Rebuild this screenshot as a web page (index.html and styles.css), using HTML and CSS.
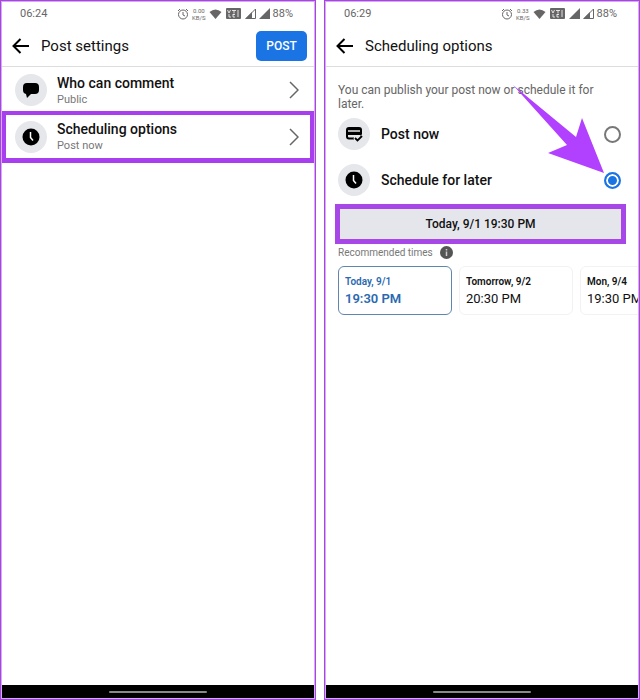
FILE: index.html
```html
<!DOCTYPE html>
<html lang="en">
<head>
  <meta charset="UTF-8" />
  <meta name="viewport" content="width=device-width, initial-scale=1.0"/>
  <title>Scheduling options</title>

  <link rel="stylesheet" href="styles.css">
</head>
<body>

  <svg class="symbols" aria-hidden="true">
    <symbol id="alarm" viewBox="0 0 12 12">
      <circle cx="6" cy="6.5" r="4.5" fill="none" stroke="currentColor" />
      <path d="M6 4v3l2 1M1 3l2-2M11 3L9 1" fill="none" stroke="currentColor" />
    </symbol>
    <symbol id="wifi" viewBox="0 0 12 10">
      <path d="M0 3Q6-2 12 3L6 10Z" fill="currentColor" />
    </symbol>
    <symbol id="volte" viewBox="0 0 15 11">
      <rect width="15" height="11" rx="1" fill="currentColor" />
      <path d="M1.5 2l1.5 3L4.5 2M6 2.500h4M8 2.500v3M3 6v3h2M7 6v3M7 6.500h2M7 9h2M12 2v7" fill="none" stroke="#fff" stroke-width="0.8" />
    </symbol>
    <symbol id="signal-low" viewBox="0 0 11 11">
      <path d="M10.5 1v9.500H1Z" fill="none" stroke="currentColor" />
      <path d="M7 4v7H0Z" fill="currentColor" />
    </symbol>
    <symbol id="signal-full" viewBox="0 0 11 11">
      <path d="M11 0v11H0Z" fill="currentColor" />
    </symbol>
    <symbol id="back" viewBox="0 0 18 16">
      <path d="M17 8H2M8.500 1L1.500 8l7 7" fill="none" stroke="#000" stroke-width="2" />
    </symbol>
    <symbol id="clock" viewBox="0 0 18 18">
      <circle cx="9" cy="9" r="8.5" fill="#000" />
      <path d="M8.500 4v5.500l2.500 3" fill="none" stroke="#fff" stroke-width="1.5" />
    </symbol>
    <symbol id="chevron" viewBox="0 0 10 18">
      <path d="M1 1l8 8-8 8" fill="none" stroke="#666" stroke-width="1.5" />
    </symbol>
  </svg>

  <div class="screens">

    <section class="phone">
      <div class="status">
        <span class="time">06:24</span>
        <svg width="12" height="12"><use href="#alarm" /></svg>
        <span class="speed"><span>0.00</span><span>KB/S</span></span>
        <svg width="13" height="10"><use href="#wifi" /></svg>
        <svg class="volte" width="15" height="11"><use href="#volte" /></svg>
        <svg width="11" height="11"><use href="#signal-low" /></svg>
        <svg width="11" height="11"><use href="#signal-full" /></svg>
        <span>88%</span>
      </div>

      <header class="header">
        <button class="back" aria-label="Back"><svg width="18" height="16"><use href="#back" /></svg></button>
        <h1>Post settings</h1>
        <button class="post-btn">POST</button>
      </header>

      <main class="settings">
        <button class="setting">
          <span class="icon">
            <svg width="18" height="18" viewBox="0 0 18 18">
              <path d="M5 2h8q4 0 4 4v3q0 4-4 4H9l-4 4-1-4q-3-.5-3-4V6q0-4 4-4Z" />
            </svg>
          </span>
          <span class="setting-text">
            <strong>Who can comment</strong>
            <small>Public</small>
          </span>
          <svg width="10" height="18"><use href="#chevron" /></svg>
        </button>
        <button class="setting highlight">
          <span class="icon"><svg width="18" height="18"><use href="#clock" /></svg></span>
          <span class="setting-text">
            <strong>Scheduling options</strong>
            <small>Post now</small>
          </span>
          <svg width="10" height="18"><use href="#chevron" /></svg>
        </button>
      </main>

      <div class="nav-bar"><span></span></div>
    </section>

    <section class="phone">
      <div class="status">
        <span class="time">06:29</span>
        <svg width="12" height="12"><use href="#alarm" /></svg>
        <span class="speed"><span>0.33</span><span>KB/S</span></span>
        <svg width="13" height="10"><use href="#wifi" /></svg>
        <svg class="volte" width="15" height="11"><use href="#volte" /></svg>
        <svg width="11" height="11"><use href="#signal-full" /></svg>
        <svg width="11" height="11"><use href="#signal-low" /></svg>
        <span>88%</span>
      </div>

      <header class="header">
        <button class="back" aria-label="Back"><svg width="18" height="16"><use href="#back" /></svg></button>
        <h1>Scheduling options</h1>
      </header>

      <main class="schedule">
        <p class="intro">You can publish your post now or schedule it for later.</p>

        <label class="option">
          <span class="icon">
            <svg width="18" height="16" viewBox="0 0 18 16">
              <path d="M4 1h10q3 0 3 3v5H1V4q0-3 3-3Z" />
              <path d="M2 8v2.500q0 2 2 2h5M16 8v2" fill="none" stroke="#000" stroke-width="2" />
              <path d="M3 5h12" stroke="#e6e7eb" stroke-width="1.5" />
              <path d="M4 10h7" stroke="#e6e7eb" stroke-width="2" />
              <path d="M9.500 11.500l3 3 5-5" fill="none" stroke="#e6e7eb" stroke-width="3" />
              <path d="M10 12l2.500 2.500L17 10" fill="none" stroke="#000" stroke-width="1.8" />
            </svg>
          </span>
          <span class="option-name">Post now</span>
          <input type="radio" name="when" value="now" />
        </label>

        <label class="option">
          <span class="icon"><svg width="18" height="18"><use href="#clock" /></svg></span>
          <span class="option-name">Schedule for later</span>
          <input type="radio" name="when" value="later" checked />
          <svg class="pointer" width="92" height="88" viewBox="0 0 92 88" aria-hidden="true">
            <path d="M0 0L63 52L69 33L91 88L35 68L54 60Z" fill="#b140ff" />
          </svg>
        </label>

        <button class="date-btn">Today, 9/1 19:30 PM</button>

        <div class="recommended">
          <span>Recommended times</span>
          <svg width="13" height="13" viewBox="0 0 13 13">
            <circle cx="6.5" cy="6.5" r="6.5" fill="#555" />
            <path d="M6.500 3v1.500M6.500 5.500v4.500" stroke="#ccc" stroke-width="1.5" />
          </svg>
        </div>

        <div class="times">
          <button class="time-card selected"><small>Today, 9/1</small><span>19:30 PM</span></button>
          <button class="time-card"><small>Tomorrow, 9/2</small><span>20:30 PM</span></button>
          <button class="time-card"><small>Mon, 9/4</small><span>19:30 PM</span></button>
        </div>
      </main>

      <div class="nav-bar"><span></span></div>
    </section>

  </div>

</body>
</html>
```
FILE: styles.css
```css
* {
  box-sizing: border-box;
}

body {
  margin: 0;
  background-color: #fff;
  color: #111;
  font-family: Roboto, "Liberation Sans", sans-serif;
}

button {
  padding: 0;
  border: none;
  background: none;
  color: inherit;
  font-family: inherit;
  cursor: pointer;
}

svg {
  display: block;
  flex-shrink: 0;
}

.symbols {
  display: none;
}

.screens {
  display: grid;
  grid-template-columns: 1fr 1fr;
  gap: 8px;
  min-height: 100vh;
}

.phone {
  display: flex;
  flex-direction: column;
  min-width: 0;
  border: 1px solid #a646e0;
  outline: 1px solid #d9a8f5;
  outline-offset: -2px;
}

/* Status bar */
.status {
  display: flex;
  align-items: center;
  gap: 3px;
  height: 25px;
  padding: 0 22px 0 19px;
  color: #666;
  font-size: 11px;
}

.time {
  flex: 1;
}

.speed {
  display: flex;
  flex-direction: column;
  font-size: 6px;
  line-height: 7px;
  text-align: center;
}

.volte {
  margin: 0 1px;
}

/* Header */
.header {
  display: flex;
  align-items: center;
  gap: 11px;
  height: 41px;
  padding: 0 8px 0 11px;
  border-bottom: 1px solid #ddd;
}

h1 {
  flex: 1;
  margin: 0;
  font-size: 15px;
  font-weight: 400;
}

.post-btn {
  width: 51px;
  height: 30px;
  border-radius: 5px;
  background-color: #1b74e4;
  color: #fff;
  font-size: 12px;
  font-weight: 500;
}

.icon {
  display: flex;
  align-items: center;
  justify-content: center;
  width: 32px;
  height: 32px;
  border-radius: 50%;
  background-color: #e6e7eb;
}

/* Post settings */
.settings {
  flex: 1;
}

.setting {
  display: flex;
  align-items: center;
  gap: 10px;
  width: 100%;
  height: 44px;
  padding: 2px 16px 0 14px;
  text-align: left;
}

.highlight {
  height: 52px;
  padding: 0 11px 0 9px;
  border: 5px solid #a83fee;
  border-top-width: 4px;
}

.setting-text {
  flex: 1;
}

.setting strong,
.setting small {
  display: block;
}

.setting strong {
  font-size: 14px;
  font-weight: 500;
  line-height: 18px;
}

.setting small {
  color: #777;
  font-size: 11px;
  line-height: 15px;
}

/* Scheduling options */
.schedule {
  flex: 1;
  padding: 16px 0 0 13px;
}

.intro {
  margin: 0 30px 0 0;
  color: #666;
  font-size: 12px;
  line-height: 14px;
}

.option {
  position: relative;
  display: flex;
  align-items: center;
  gap: 11px;
  height: 46px;
  padding-right: 18px;
}

.option-name {
  flex: 1;
  font-size: 14px;
  font-weight: 500;
}

.option input {
  appearance: none;
  width: 17px;
  height: 17px;
  margin: 0;
  border: 2px solid #777;
  border-radius: 50%;
}

.option input:checked {
  border-color: #1b74e4;
  background-color: #1b74e4;
  box-shadow: inset 0 0 0 2px #fff;
}

.pointer {
  position: absolute;
  right: 34px;
  bottom: 30px;
  pointer-events: none;
}

.date-btn {
  display: block;
  width: calc(100% - 10px);
  height: 40px;
  margin: 1px 0 0 -3px;
  border: 5px solid #a847e8;
  background-color: #e4e6eb;
  font-size: 12px;
  font-weight: 500;
}

.recommended {
  display: flex;
  align-items: center;
  gap: 7px;
  height: 17px;
  color: #777;
  font-size: 10px;
}

.times {
  display: flex;
  gap: 7px;
  margin-top: 5px;
  overflow: hidden;
}

.time-card {
  flex: 0 0 114px;
  height: 49px;
  padding: 0 6px;
  border: 1px solid #f2f2f2;
  border-radius: 6px;
  text-align: left;
}

.time-card small,
.time-card span {
  display: block;
}

.time-card small {
  font-size: 10px;
  font-weight: 600;
  line-height: 15px;
}

.time-card span {
  font-size: 13px;
  line-height: 19px;
}

.selected {
  border-color: #5f87ad;
  color: #2b69b0;
}

.selected span {
  font-weight: 600;
}

/* Gesture bar */
.nav-bar {
  display: flex;
  align-items: center;
  justify-content: center;
  height: 14px;
  background-color: #000;
}

.nav-bar span {
  width: 98px;
  height: 2px;
  border-radius: 1px;
  background-color: #888;
}
```
